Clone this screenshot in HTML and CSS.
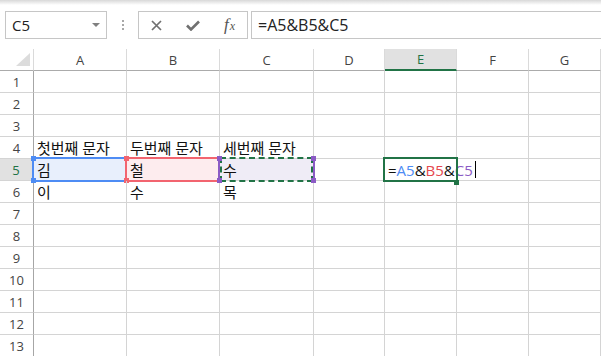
FILE: index.html
```html
<!DOCTYPE html>
<html lang="ko">
<head>
    <meta charset="UTF-8">
    <meta name="viewport" content="width=device-width, initial-scale=1.0">
    <title>CONCATENATE - 엑셀</title>
    <link rel="stylesheet" href="styles.css">
</head>
<body>

    <div class="formula-bar">
        <div class="name-box">
            <span>C5</span>
            <span class="arrow"></span>
        </div>
        <div class="grip"><span></span><span></span><span></span></div>
        <div class="fx-box">
            <svg class="icon" width="11" height="11" viewBox="0 0 11 11">
                <path d="M1 1 L10 10 M10 1 L1 10" stroke="#707070" stroke-width="1.7" fill="none"/>
            </svg>
            <svg class="icon" width="14" height="11" viewBox="0 0 14 11">
                <path d="M1 5.5 L5 9.5 L13 1.5" stroke="#707070" stroke-width="2.6" fill="none"/>
            </svg>
            <span class="fx">f<span class="fx-x">x</span></span>
        </div>
        <div class="formula-input">=A5&amp;B5&amp;C5</div>
    </div>

    <div class="sheet" id="sheet">
        <!-- Les cellules sont générées par le script -->
    </div>

    <script>
        const sheet = document.getElementById('sheet');
        const cols = ['A', 'B', 'C', 'D', 'E', 'F', 'G'];
        const rows = 13;

        // Contenu des cellules
        const data = {
            A4: '첫번째 문자', B4: '두번째 문자', C4: '세번째 문자',
            A5: '김', B5: '철', C5: '수',
            A6: '이', B6: '수', C6: '목'
        };

        // Plages référencées par la formule
        const refs = { A5: 'blue', B5: 'red', C5: 'purple' };

        function addCell(className, text) {
            const cell = document.createElement('div');
            cell.className = className;
            if (text) cell.textContent = text;
            sheet.appendChild(cell);
            return cell;
        }

        // En-têtes de colonnes
        const corner = addCell('corner');
        corner.innerHTML = '<div class="tri"></div>';
        cols.forEach(c => addCell(c === 'E' ? 'hdr-col selected' : 'hdr-col', c));

        for (let r = 1; r <= rows; r++) {
            addCell(r === 5 ? 'hdr-row selected' : 'hdr-row', String(r));

            cols.forEach(c => {
                const key = c + r;
                const color = refs[key];
                const cell = addCell(color ? 'cell ref-' + color : 'cell', data[key]);

                if (color) {
                    const box = document.createElement('div');
                    box.className = 'ref ' + color;
                    box.innerHTML = '<i class="h tl"></i><i class="h tr"></i><i class="h bl"></i><i class="h br"></i>';
                    if (color === 'purple') box.innerHTML += '<div class="marquee"></div>';
                    cell.appendChild(box);
                }

                if (key === 'E5') {
                    cell.classList.add('editing');
                    cell.innerHTML =
                        '<span class="entry">=<span class="c-blue">A5</span>&amp;<span class="c-red">B5</span>&amp;<span class="c-purple">C5</span></span>' +
                        '<span class="caret"></span>' +
                        '<div class="active"></div><div class="fill-handle"></div>';
                }
            });
        }
    </script>

</body>
</html>
```

FILE: styles.css
```css
/* feuille de calcul */
* {
    box-sizing: border-box;
}

body {
    margin: 0;
    width: 601px;
    height: 356px;
    overflow: hidden;
    background-color: white;
    font-family: "Open Sans", "Noto Sans CJK KR", sans-serif;
    color: #222;
}

.formula-bar {
    height: 49px;
    display: flex;
    align-items: flex-start;
    padding: 11px 0 0 5px;
    background: linear-gradient(#d8d8d8, #ffffff 5px);
}

.name-box {
    width: 102px;
    height: 28px;
    border: 1px solid #c6c6c6;
    background-color: white;
    display: flex;
    align-items: center;
    justify-content: space-between;
    padding: 0 6px 0 6px;
    font-size: 15px;
}

.arrow {
    width: 0;
    height: 0;
    border-left: 4px solid transparent;
    border-right: 4px solid transparent;
    border-top: 4px solid #808080;
}

.grip {
    width: 31px;
    height: 28px;
    display: flex;
    flex-direction: column;
    align-items: center;
    justify-content: center;
    gap: 2px;
}

.grip span {
    width: 2px;
    height: 2px;
    background-color: #a8a8a8;
}

.fx-box {
    width: 110px;
    height: 28px;
    border: 1px solid #c6c6c6;
    background-color: white;
    display: flex;
    align-items: center;
    justify-content: space-around;
}

.icon {
    display: block;
}

.fx {
    font-family: "Liberation Serif", serif;
    font-style: italic;
    font-size: 17px;
    color: #555;
    line-height: 1;
    margin-top: -2px;
}

.fx-x {
    font-size: 12px;
    margin-left: 1px;
}

.formula-input {
    flex: 1;
    height: 28px;
    margin-left: 3px;
    margin-right: -4px;
    border: 1px solid #c6c6c6;
    background-color: white;
    padding-left: 6px;
    font-size: 16px;
    line-height: 26px;
}

.sheet {
    display: grid;
    grid-template-columns: 34px 93px 93px 94px 71px 72px 72px 72px;
    grid-auto-rows: 22px;
}

.corner {
    border-right: 1px solid #dadada;
    border-bottom: 1px solid #ababab;
    display: flex;
    align-items: flex-end;
    justify-content: flex-end;
    padding: 0 3px 4px 0;
}

.tri {
    width: 14px;
    height: 13px;
    background-color: #dcdcdc;
    clip-path: polygon(100% 0, 100% 100%, 0 100%);
}

.hdr-col {
    border-right: 1px solid #dadada;
    border-bottom: 1px solid #ababab;
    display: flex;
    align-items: center;
    justify-content: center;
    font-size: 13px;
    color: #444;
}

.hdr-col.selected {
    background-color: #e1e1e1;
    color: #217346;
    border-bottom: 2px solid #217346;
}

.hdr-row {
    border-right: 1px solid #a6a6a6;
    border-bottom: 1px solid #d4d4d4;
    display: flex;
    align-items: center;
    justify-content: center;
    font-size: 13px;
    color: #444;
}

.hdr-row.selected {
    background-color: #e1e1e1;
    color: #217346;
    border-right: 2px solid #217346;
}

.cell {
    position: relative;
    border-right: 1px solid #d4d4d4;
    border-bottom: 1px solid #d4d4d4;
    display: flex;
    align-items: center;
    padding: 0 3px;
    font-size: 15px;
    color: #111;
    white-space: nowrap;
}

.cell.ref-blue {
    background-color: #e8effc;
}

.cell.ref-red {
    background-color: #fdecee;
}

.cell.ref-purple {
    background-color: #efecf6;
}

/* cadres des plages référencées */
.ref {
    position: absolute;
    top: -2px;
    left: -2px;
    right: -2px;
    bottom: -2px;
    border: 2px solid;
}

.ref.blue {
    border-color: #4e8cf4;
}

.ref.red {
    border-color: #f2646f;
}

.ref.purple {
    border-color: transparent #8b5bc5;
}

.h {
    position: absolute;
    width: 5px;
    height: 5px;
}

.blue .h { background-color: #4e8cf4; }
.red .h { background-color: #f2646f; }
.purple .h { background-color: #8b5bc5; z-index: 2; }

.h.tl { top: -3px; left: -3px; }
.h.tr { top: -3px; right: -3px; }
.h.bl { bottom: -3px; left: -3px; }
.h.br { bottom: -3px; right: -3px; }

.marquee {
    position: absolute;
    top: -2px;
    bottom: -2px;
    left: 0;
    right: 0;
    border: 2px dashed #217346;
}

.c-blue { color: #4e8cf4; }
.c-red { color: #e5484f; }
.c-purple { color: #8b5bc5; }

.editing {
    overflow: visible;
    z-index: 3;
}

.entry {
    flex-shrink: 0;
}

.caret {
    flex-shrink: 0;
    width: 1px;
    height: 17px;
    margin-left: 2px;
    background-color: #000;
}

.active {
    position: absolute;
    top: -2px;
    left: -2px;
    right: -2px;
    bottom: -2px;
    border: 2px solid #217346;
}

.fill-handle {
    position: absolute;
    right: -3px;
    bottom: -5px;
    width: 5px;
    height: 5px;
    background-color: #217346;
}
```
